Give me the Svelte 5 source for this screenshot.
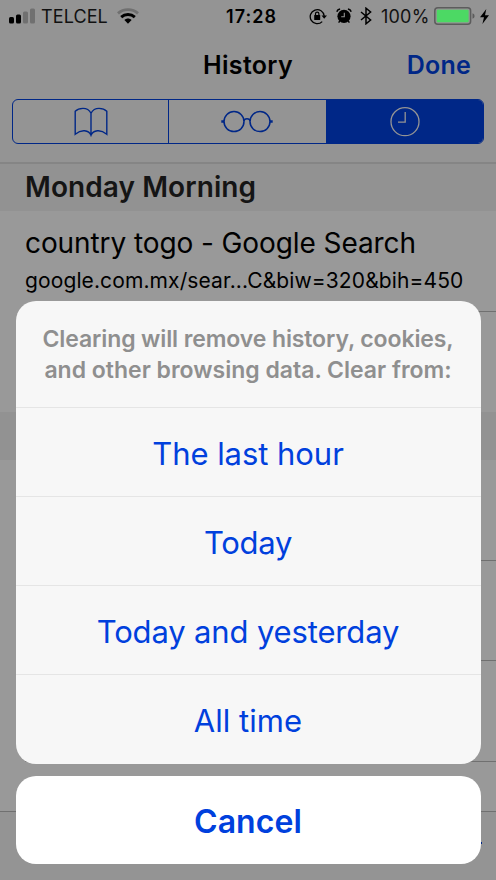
<script>
  const choices = [
    { label: 'The last hour', spacing: -0.05 },
    { label: 'Today', spacing: -0.3 },
    { label: 'Today and yesterday', spacing: -0.15 },
    { label: 'All time', spacing: 0.05 }
  ];
</script>

<main class="phone">
  <header>
    <div class="status">
      <svg class="signal" width="26" height="16" viewBox="0 0 26 16">
        <rect x="0" y="9" width="5" height="6.5" rx="1.5" />
        <rect x="7" y="6.5" width="5" height="9" rx="1.5" />
        <rect x="14" y="3.5" width="5" height="12" rx="1.5" fill="#707070" />
        <rect x="21" y="0.5" width="5" height="15" rx="1.5" fill="#707070" />
      </svg>
      <span class="carrier">TELCEL</span>
      <svg class="wifi" width="22" height="16" viewBox="0 0 22 16" fill="none">
        <path d="M1 5.4C6.5.3 15.5.3 21 5.4" stroke="#707070" stroke-width="2.8" />
        <path d="M4.2 9.1C8 5.6 14 5.6 17.8 9.1" stroke="#000" stroke-width="2.9" />
        <path d="M7.4 12.1C9.5 10.1 12.5 10.1 14.6 12.1L11 15.7Z" fill="#000" />
      </svg>
      <span class="time">17:28</span>
      <svg class="lock" width="19" height="17" viewBox="0 0 19 17" fill="none" stroke="#000">
        <path d="M13.2 13.6A7 7 0 1 1 15.2 8" stroke-width="1.3" />
        <path d="M12.5 7.4H18L15.2 10.8Z" fill="#000" stroke="none" />
        <rect x="5.2" y="7.1" width="6" height="4.8" rx=".5" fill="#000" stroke="none" />
        <path d="M6.5 7.5V5.8a1.7 1.7 0 0 1 3.4 0V7.5" stroke-width="1.2" />
      </svg>
      <svg class="alarm" width="16" height="16" viewBox="0 0 16 16" fill="none">
        <circle cx="8" cy="8.3" r="6.6" fill="#000" />
        <path d="M3.8 13l-1.2 1.6M12.2 13l1.2 1.6" stroke="#000" stroke-width="1.4" />
        <path d="M.9 3.9Q1.4 1.4 4.1 1M15.1 3.9Q14.6 1.4 11.9 1" stroke="#000" stroke-width="1.3" />
        <path d="M8.3 4.8V8.7H5.2" stroke="#949494" stroke-width="1.1" />
      </svg>
      <svg class="bluetooth" width="12" height="18" viewBox="0 0 12 18" fill="none" stroke="#000" stroke-width="1.5">
        <path d="M1 5L10.6 13 6 16.8V1.2L10.6 5 1 13" />
      </svg>
      <span class="percent">100%</span>
      <svg class="battery" width="41" height="18" viewBox="0 0 41 18">
        <rect x=".8" y=".8" width="35.8" height="16.4" rx="3" fill="none" stroke="#5c5c5c" stroke-width="1.5" />
        <rect x="2.8" y="2.8" width="31.8" height="12.4" rx="1" fill="#4cd964" />
        <path d="M38.5 6.2Q40.6 7 40.6 9T38.5 11.8Z" fill="#5c5c5c" />
      </svg>
      <svg class="bolt" width="9" height="15" viewBox="0 0 9 15"><path d="M6.3 0L0 8.2H4L2.4 15 9 6.2H5Z" /></svg>
    </div>

    <div class="titlebar">
      <span></span>
      <h1>History</h1>
      <button class="done">Done</button>
    </div>

    <div class="tabs">
      <button class="bookmarks" aria-label="Bookmarks">
        <svg width="34" height="32" viewBox="0 0 34 32" fill="none" stroke="currentColor" stroke-width="1.4">
          <path d="M17 7.2Q14.5 2.4 9 2.4Q4 2.4 1.2 5.2V28.2Q6 24.4 10.5 24.8Q15.5 25.3 17 29.2Q18.5 25.3 23.5 24.8Q28 24.4 32.8 28.2V5.2Q30 2.4 25 2.4Q19.5 2.4 17 7.2ZM17 7.2V29.2" />
        </svg>
      </button>
      <button class="reading" aria-label="Reading List">
        <svg width="52" height="24" viewBox="0 0 52 24" fill="none" stroke="currentColor" stroke-width="1.5">
          <circle cx="13" cy="11.6" r="10" /><circle cx="39" cy="11.6" r="10" />
          <path d="M22.8 11Q23.2 8.8 26 8.8T29.2 11" />
          <path d="M.3 11.6H3.2M48.8 11.6H51.7" stroke-width="2.5" />
        </svg>
      </button>
      <button class="selected" aria-label="History">
        <svg width="30" height="30" viewBox="0 0 30 30" fill="none" stroke="currentColor" stroke-width="1.3">
          <circle cx="15" cy="14.7" r="14" /><path d="M15.2 5V15.2H8" />
        </svg>
      </button>
    </div>
  </header>

  <section class="history">
    <h2>Monday Morning</h2>
    <article>
      <div class="page-title">country togo - Google Search</div>
      <div class="address">google.com.mx/sear...C&amp;biw=320&amp;bih=450</div>
    </article>
    <article class="last"></article>
    <div class="band"></div>
    <article></article>
    <article></article>
    <article></article>
  </section>
  <footer><i></i></footer>

  <div class="sheet">
    <div class="options">
      <p><span class="first-line">Clearing will remove history, cookies,</span><br /><span class="second-line">and other browsing data. Clear from:</span></p>
      {#each choices as choice}
        <button style="letter-spacing: {choice.spacing}px">{choice.label}</button>
      {/each}
    </div>
    <button class="cancel">Cancel</button>
  </div>
</main>

<style>
  :global(body) { margin: 0; }
  * { box-sizing: border-box; }
  .phone {
    position: relative;
    display: flex;
    flex-direction: column;
    width: 496px;
    height: 880px;
    overflow: hidden;
    background: #999;
    color: #000;
    font-family: Inter, "Liberation Sans", sans-serif;
  }
  button {
    padding: 0;
    border: 0;
    background: none;
    font: inherit;
    color: #0040dd;
  }
  h1, h2, p { margin: 0; }
  svg { display: block; flex: none; }
  header {
    flex: none;
    height: 164px;
    background: #949494;
    border-bottom: 2px solid #858585;
  }
  .status {
    display: flex;
    align-items: center;
    height: 32px;
    padding-left: 9px;
    font-size: 18px;
    white-space: nowrap;
  }
  .carrier { width: 68px; margin-left: 6px; color: #111; letter-spacing: 0.1px; }
  .wifi { margin-left: 8px; }
  .time { width: 52px; margin-left: 87px; font-weight: 600; letter-spacing: 1.05px; }
  .lock { margin-left: 31px; }
  .alarm { margin-left: 8px; }
  .bluetooth { margin-left: 8px; }
  .percent { width: 48px; margin-left: 9px; color: #111; letter-spacing: 0.2px; }
  .battery { margin-left: 5px; }
  .bolt { margin-left: 5px; }
  .titlebar {
    display: grid;
    grid-template-columns: 1fr auto 1fr;
    align-items: center;
    height: 67px;
    padding: 0 25px 1px;
    font-size: 25px;
    font-weight: 600;
  }
  h1 { font-size: 25px; font-weight: 600; letter-spacing: 0.3px; }
  .done { justify-self: end; color: #002787; font-weight: 600; letter-spacing: 0.25px; }
  .tabs {
    display: flex;
    height: 45px;
    margin: 0 12px;
    border: 1.5px solid #002787;
    border-radius: 6px;
    overflow: hidden;
  }
  .tabs button {
    display: flex;
    flex: none;
    align-items: center;
    justify-content: center;
    color: #002787;
  }
  .tabs .bookmarks { width: 155px; }
  .tabs .reading { width: 158px; padding-right: 2px; }
  .tabs button + button { border-left: 1px solid #002787; }
  .tabs .selected { flex: 1; background: #002787; color: #949494; }
  h2 {
    height: 47px;
    padding-left: 25px;
    background: #929292;
    color: #151515;
    font-size: 28px;
    font-weight: 600;
    line-height: 46px;
    letter-spacing: 0.08px;
  }
  article {
    height: 100.5px;
    margin-left: 25px;
    border-bottom: 1px solid #707070;
    white-space: nowrap;
  }
  article.last { border-bottom-color: transparent; }
  .page-title { padding-top: 13px; font-size: 28px; line-height: 38px; letter-spacing: -0.09px; }
  .address { padding-top: 1px; font-size: 21px; line-height: 36px; letter-spacing: 0.11px; }
  .band { height: 48px; background: #929292; }
  footer {
    position: absolute;
    inset: 811px 0 0;
    background: #949494;
    border-top: 1px solid #707070;
  }
  footer i {
    position: absolute;
    top: 30px;
    left: 480px;
    width: 2px;
    height: 2px;
    background: #002787;
  }
  .sheet {
    position: absolute;
    inset: 301px 15.5px 16px;
    display: flex;
    flex-direction: column;
    gap: 12.5px;
  }
  .options {
    display: flex;
    flex-direction: column;
    height: 462.5px;
    border-radius: 20px;
    background: #f7f7f7;
    overflow: hidden;
  }
  .options p {
    height: 106px;
    padding-top: 23px;
    color: #8f8f8f;
    font-size: 23px;
    font-weight: 600;
    line-height: 31px;
    text-align: center;
    white-space: nowrap;
  }
  .first-line { letter-spacing: -0.11px; }
  .options button {
    flex: 1;
    padding-top: 2px;
    border-top: 1.5px solid #e5e5e5;
    font-size: 31px;
  }
  .cancel {
    flex: 1;
    padding-top: 2px;
    border-radius: 20px;
    background: #fff;
    font-size: 32px;
    font-weight: 600;
    letter-spacing: 0.1px;
  }
</style>
